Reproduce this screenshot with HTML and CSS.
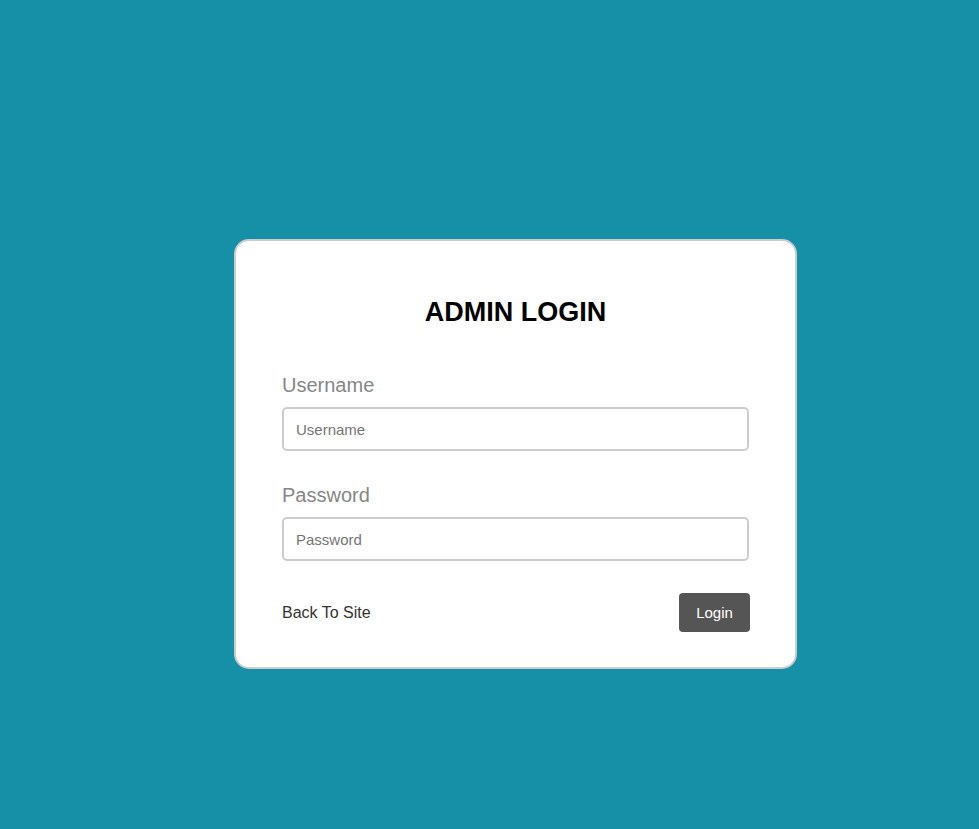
FILE: index.html
```html
<!DOCTYPE html>
<html>
<head>
<meta charset="utf-8">
<link rel="stylesheet" href="styles.css">
</head>
<body>
<div class="page">
  <form class="card">
    <h1 class="title">ADMIN LOGIN</h1>
    <div class="field">
      <label class="label">Username</label>
      <input class="input" type="text" placeholder="Username">
    </div>
    <div class="field">
      <label class="label">Password</label>
      <input class="input" type="password" placeholder="Password">
    </div>
    <div class="actions">
      <a class="back">Back To Site</a>
      <button class="btn" type="button">Login</button>
    </div>
  </form>
</div>
</body>
</html>
```
FILE: styles.css
```css
html, body {
  margin: 0;
  padding: 0;
  background: #1690a7;
  height: 100%;
}
body {
  font-family: "Liberation Sans", Arial, sans-serif;
}
.page {
  padding: 239px 0 0 234px;
}
.card {
  box-sizing: border-box;
  width: 563px;
  height: 430px;
  background: #fff;
  border: 2px solid #cccccc;
  border-radius: 15px;
  padding: 52px 46px 0 46px;
}
.title {
  margin: 0 0 42px 0;
  text-align: center;
  font-size: 27px;
  font-weight: bold;
  color: #000;
  line-height: 38px;
}
.field {
  margin-bottom: 32px;
}
.label {
  display: block;
  font-size: 20px;
  color: #868686;
  line-height: 24px;
  margin-bottom: 10px;
}
.input {
  box-sizing: border-box;
  width: 100%;
  height: 44px;
  border: 2px solid #cccccc;
  border-radius: 5px;
  padding: 0 12px;
  font-family: "Liberation Sans", Arial, sans-serif;
  font-size: 15px;
  color: #333;
  outline: none;
}
.input::placeholder {
  color: #757575;
}
.actions {
  display: flex;
  justify-content: space-between;
  align-items: center;
  margin-top: 32px;
}
.back {
  font-size: 16px;
  color: #333;
  text-decoration: none;
}
.btn {
  width: 71px;
  height: 39px;
  margin-right: -1px;
  border: none;
  border-radius: 4px;
  background: #555555;
  color: #fff;
  font-family: "Liberation Sans", Arial, sans-serif;
  font-size: 15px;
}
```
